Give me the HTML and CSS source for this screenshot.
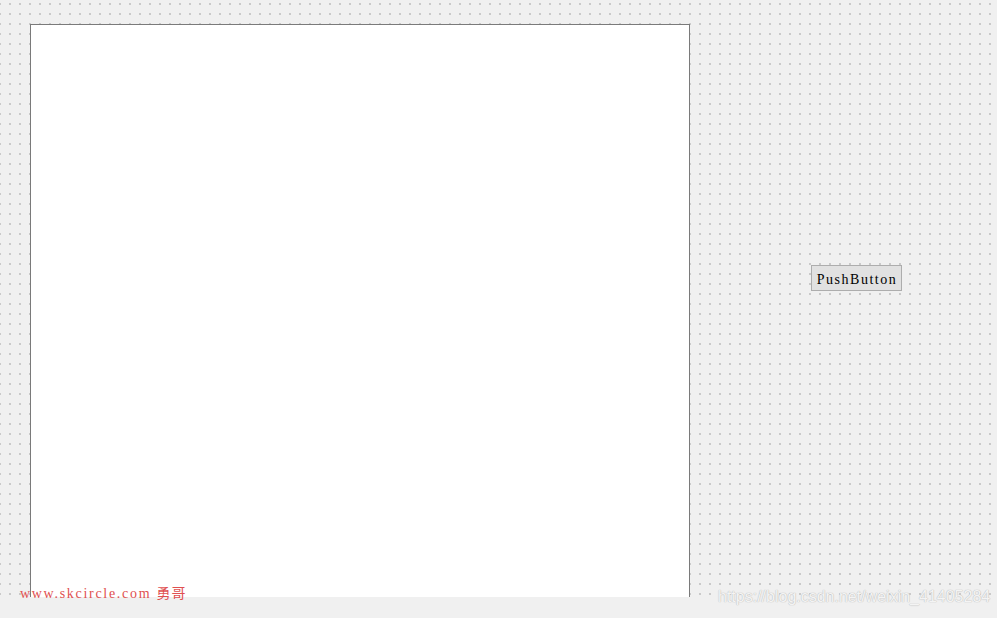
FILE: index.html
```html
<!DOCTYPE html>
<html lang="zh-CN">
<head>
    <meta charset="UTF-8">
    <title>Form</title>
    <link rel="stylesheet" href="styles.css">
</head>
<body>
    <div class="designer">
        <!-- area de desenho com grade de pontos -->
        <div class="canvas">
            <div class="frame"></div>
            <button class="push">PushButton</button>
        </div>
        <div class="statusbar"></div>

        <span class="mark-left">www.skcircle.com <span class="cjk">勇哥</span></span>
        <span class="mark-right">https://blog.csdn.net/weixin_41405284</span>
    </div>
</body>
</html>
```

FILE: styles.css
```css
* {
    margin: 0;
    padding: 0;
    box-sizing: border-box;
}

body {
    background-color: #f0f0f0;
    width: 997px;
    height: 618px;
    overflow: hidden;
}

.designer {
    position: relative;
    width: 997px;
    height: 618px;
    display: flex;
    flex-direction: column;
}

/* grade de pontos do designer */
.canvas {
    height: 597px;
    display: flex;
    align-items: flex-start;
    padding: 24px 0 0 30px;
    background-color: #f0f0f0;
    background-image: radial-gradient(circle, #b4b4b4 0.6px, transparent 0.9px);
    background-size: 10px 10px;
    background-position: -5px -1px;
}

.frame {
    width: 660px;
    height: 573px;
    background-color: #fff;
    border: 1px solid #7a7a7a;
    border-bottom: none;
}

.push {
    margin: 241px 0 0 121px;
    width: 91px;
    height: 26px;
    background-color: #e1e1e1;
    border: 1px solid #adadad;
    font-family: "Liberation Serif", serif;
    font-size: 14px;
    letter-spacing: 1.5px;
    padding: 3px 0 0 1px;
    color: #000;
}

.statusbar {
    flex: 1;
    background-color: #f0f0f0;
}

.mark-left {
    position: absolute;
    left: 20px;
    top: 582px;
    font-family: "Liberation Serif", serif;
    font-size: 14px;
    letter-spacing: 1.7px;
    color: #e05050;
}

.mark-left .cjk {
    font-family: "Noto Sans CJK SC", sans-serif;
    font-size: 14px;
    letter-spacing: 1px;
}

.mark-right {
    position: absolute;
    left: 718px;
    top: 588px;
    font-family: "Liberation Sans", sans-serif;
    font-size: 16px;
    color: #f4f4f4;
    text-shadow: 0 0 1px #bdbdbd, 0 0 1px #bdbdbd;
}
```
